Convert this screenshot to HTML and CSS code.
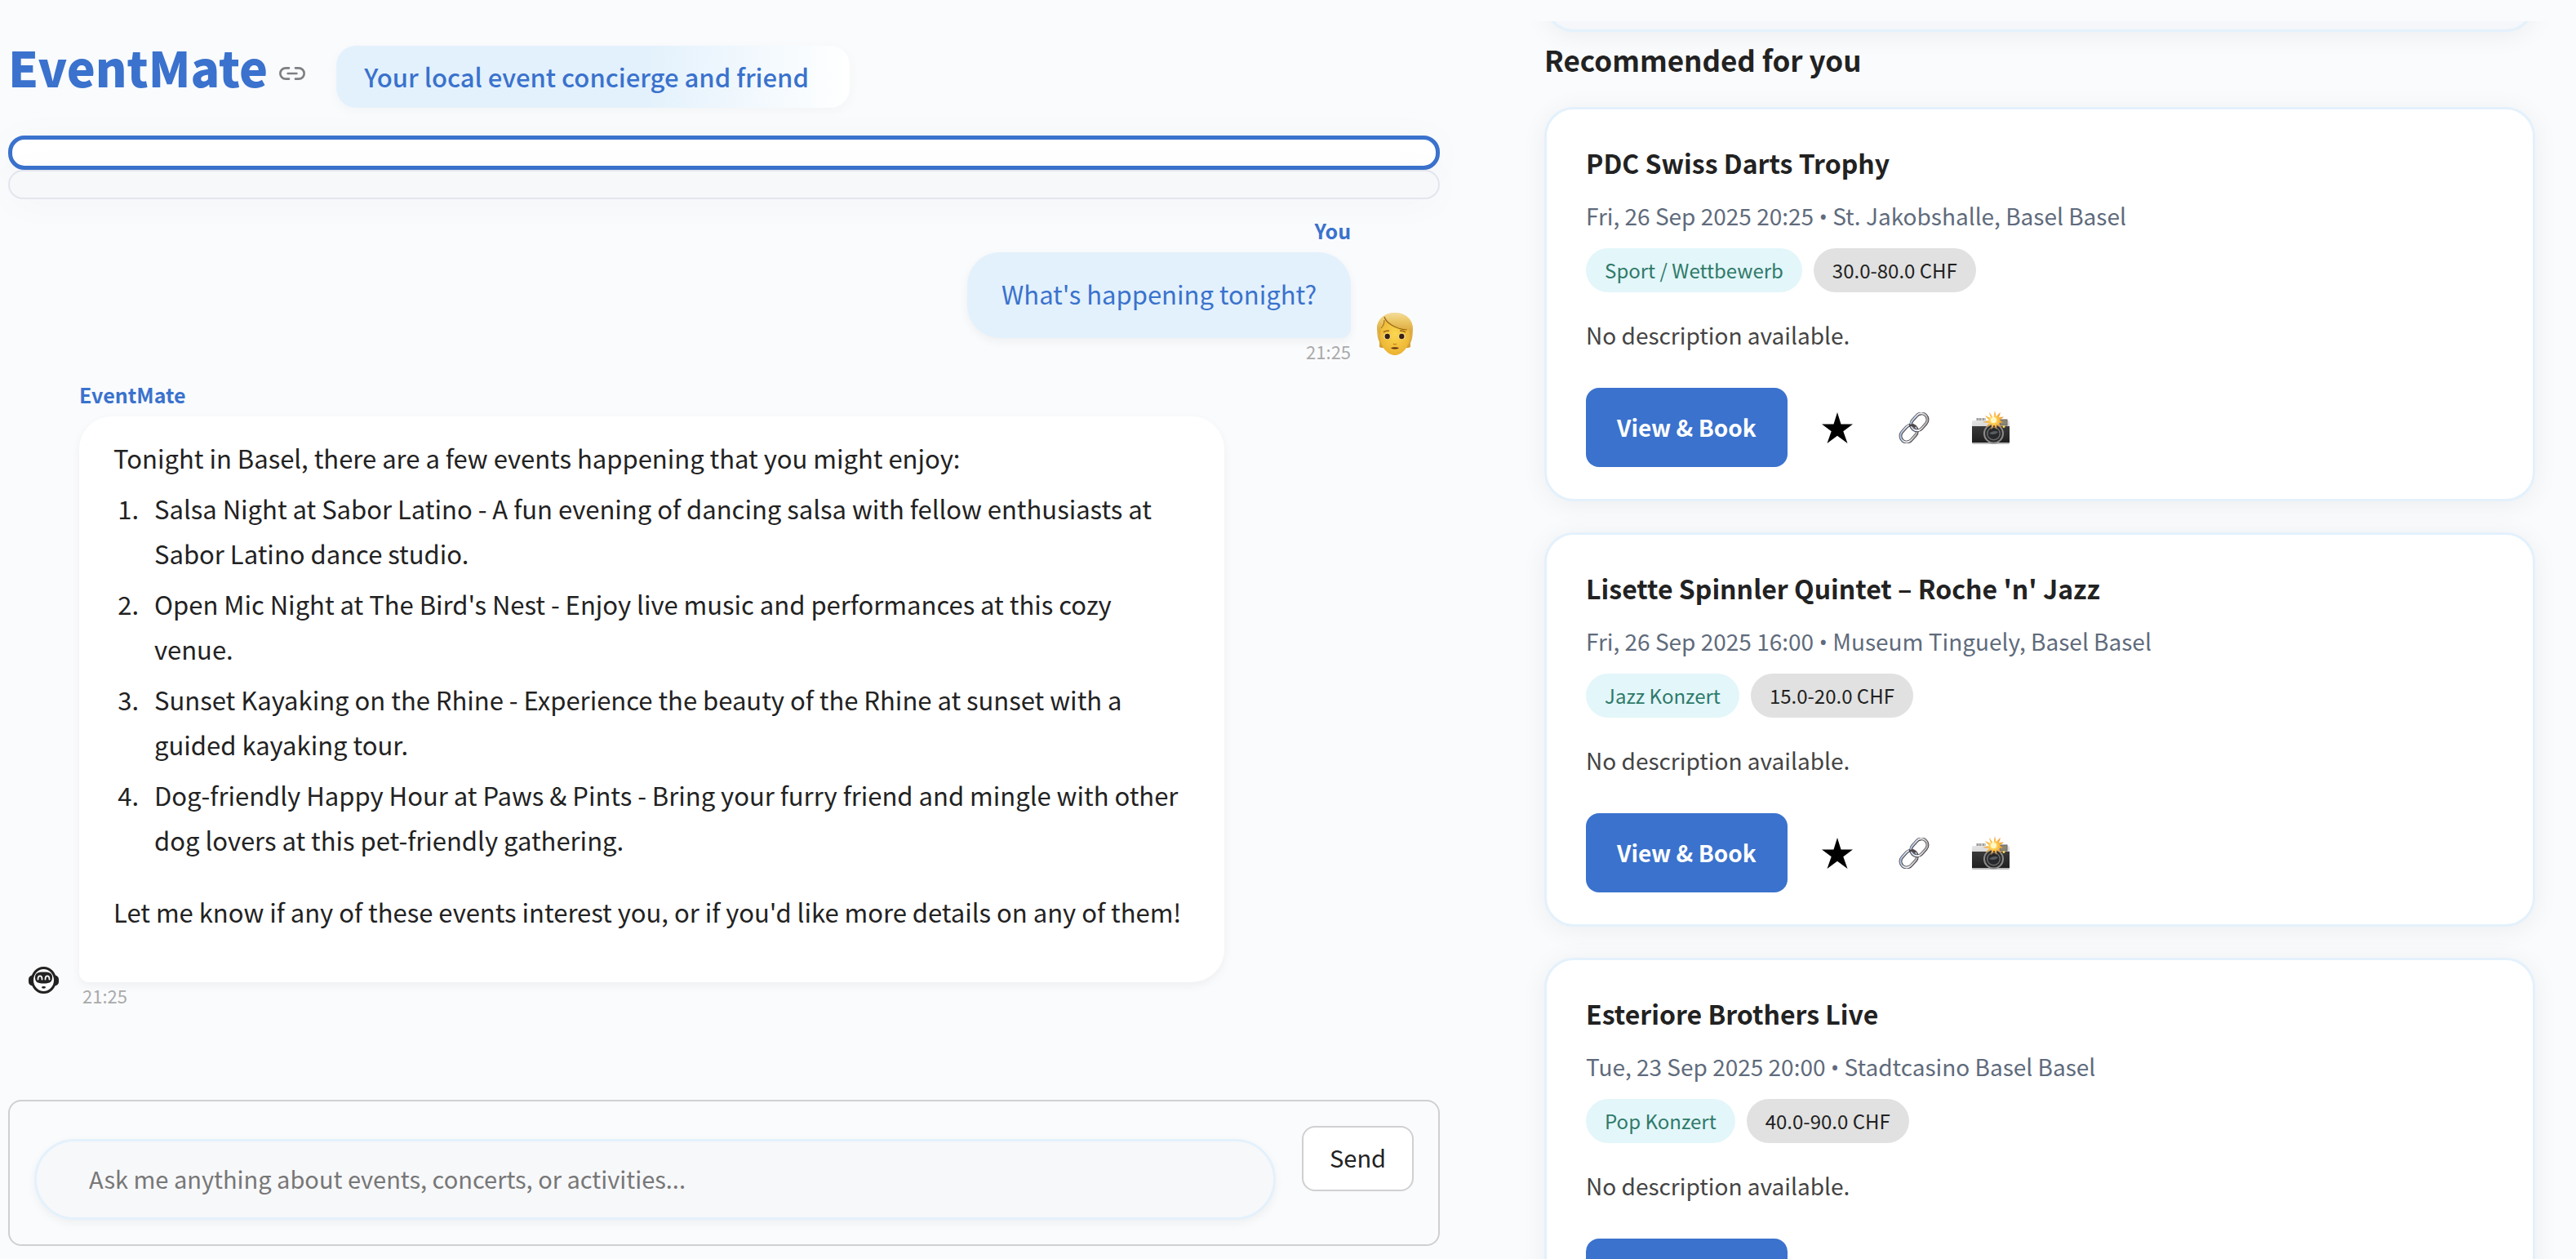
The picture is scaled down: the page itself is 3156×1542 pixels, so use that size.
FILE: index.html
```html
<!DOCTYPE html>
<html lang="en">
<head>
<meta charset="utf-8">
<meta name="viewport" content="width=device-width, initial-scale=1">
<title>EventMate</title>
<link rel="stylesheet" href="styles.css">
</head>
<body>
<svg class="sprite" aria-hidden="true">
  <defs>
    <linearGradient id="chrome" x1="0" y1="0" x2="1" y2="1">
      <stop offset="0" stop-color="#9db8e0"/><stop offset=".5" stop-color="#f4f7fb"/><stop offset="1" stop-color="#a39ea2"/>
    </linearGradient>
    <linearGradient id="silver" x1="0" y1="0" x2="0" y2="1">
      <stop offset="0" stop-color="#e4e4e4"/><stop offset="1" stop-color="#b9b9b9"/>
    </linearGradient>
    <linearGradient id="leather" x1="0" y1="0" x2="0" y2="1">
      <stop offset="0" stop-color="#3a3a3a"/><stop offset="1" stop-color="#1f1f1f"/>
    </linearGradient>
    <radialGradient id="flash">
      <stop offset="0" stop-color="#fffbe0"/><stop offset=".3" stop-color="#ffd65a"/><stop offset="1" stop-color="#f08a1c"/>
    </radialGradient>
    <linearGradient id="hair" x1="0" y1="0" x2="0" y2="1">
      <stop offset="0" stop-color="#f3dc9c"/><stop offset=".35" stop-color="#ecc766"/><stop offset="1" stop-color="#d29a2c"/>
    </linearGradient>
    <radialGradient id="skin" cx=".5" cy=".4" r=".65">
      <stop offset="0" stop-color="#fbd750"/><stop offset="1" stop-color="#eab030"/>
    </radialGradient>
    <symbol id="star" viewBox="0 0 38 38">
      <path d="M19 0 23.5 14.500H38L26.300 23.200 31.500 38 19 28.700 6.500 38 11.700 23.200 0 14.500H14.500Z"/>
    </symbol>
    <symbol id="link" viewBox="0 0 38 38">
      <g fill="none" transform="rotate(-48 19 19)">
        <rect x="-2" y="11.500" width="23" height="15" rx="7.500" stroke="#4b4548" stroke-width="3.800"/>
        <rect x="-2" y="11.300" width="23" height="15" rx="7.500" stroke="url(#chrome)" stroke-width="2"/>
        <rect x="17" y="11.500" width="23" height="15" rx="7.500" stroke="#4b4548" stroke-width="3.800"/>
        <rect x="17" y="11.300" width="23" height="15" rx="7.500" stroke="url(#chrome)" stroke-width="2"/>
        <path d="M17 12.500c3 2 4 4 4 7" stroke="#4b4548" stroke-width="2.600"/>
      </g>
    </symbol>
    <symbol id="camera" viewBox="0 0 46 42">
      <path d="M5 9h12v4H5z" fill="#c9c9c9"/>
      <path d="M7 9v3M10 9v3M14 9v3" stroke="#777" stroke-width="1"/>
      <rect x="0" y="12" width="46" height="29" rx="1.500" fill="url(#silver)"/>
      <rect x="0" y="19" width="46" height="20" fill="url(#leather)"/>
      <rect x="34" y="11" width="9" height="7" fill="#8c8672" stroke="#666"/>
      <circle cx="26.500" cy="28" r="12.500" fill="#8b8b8b"/>
      <circle cx="26.500" cy="28" r="10.500" fill="#2a2a2a"/>
      <circle cx="26.500" cy="28" r="8.500" fill="#6b6b6b"/>
      <circle cx="26.500" cy="28" r="7" fill="#26282b"/>
      <path d="M21 28c3-3 8-4 11-2-2 3-7 4-11 2z" fill="#595d62"/>
      <circle cx="39" cy="19.500" r="1.500" fill="#ffd84a"/>
      <path d="M26 11 28 0l1.500 7L35 2l-2 6 6-.500-5 4 4 3-5.500.5 4 6-6-4-.5 6-3-5.500-3.500 6 .5-7-7 4 4-5.500-8-1 8-2-5-6 7 3-2-7 4 5z" fill="url(#flash)"/>
      <circle cx="26.500" cy="11.500" r="3.500" fill="#fff7c8"/>
    </symbol>
    <symbol id="person" viewBox="0 0 44 52">
      <path d="M0 20C0 8 9 0 22 0s22 8 22 20c0 8-1 13-3 17v5c-3 2-7 1-9-1H12c-2 2-6 3-9 1v-6C1 32 0 27 0 20z" fill="url(#hair)"/>
      <path d="M4 20c0-5 2-9 6-11 6 7 17 10 28 10 2 4 2 9 2 13-1 10-9 20-18 20S5 42 4 32z" fill="url(#skin)"/>
      <path d="M0 20C0 9 9 0 22 0s22 9 22 20l-3 9c0-4-1-7-3-9-12 0-22-5-28-12 0 6-3 9-5 11-1 3-1 6-1 9z" fill="url(#hair)"/>
      <path d="M9 5c2 7 13 15 28 16" fill="none" stroke="#966313" stroke-width="1.200"/>
      <path d="M9 9c0 5-2 8-4 10" fill="none" stroke="#966313" stroke-width="1"/>
      <path d="M8 24c2-2 4-2 7-2M28 22c3 0 5 0 7 2" fill="none" stroke="#9a6416" stroke-width="1.300"/>
      <ellipse cx="12.500" cy="29" rx="4" ry="3.600" fill="#fff3d8"/><circle cx="12.700" cy="29" r="3.200" fill="#382012"/>
      <ellipse cx="30.500" cy="29" rx="4" ry="3.600" fill="#fff3d8"/><circle cx="30.300" cy="29" r="3.200" fill="#382012"/>
      <path d="M20 38c1 1 3 1 4 0" fill="none" stroke="#c98616" stroke-width="1.400"/>
      <path d="M17 43c3-1 7-1 10 0-2 2-8 2-10 0z" fill="#5f2c10"/>
    </symbol>
  </defs>
</svg>

<div class="layout">
  <main class="chat">
    <header class="brand">
      <h1 class="brand-name">EventMate</h1>
      <a class="anchor" href="#eventmate" aria-label="Link to heading">
        <svg viewBox="0 0 24 24" fill="none" stroke="currentColor" stroke-width="2" stroke-linecap="round" stroke-linejoin="round"><path d="M15 7h3a5 5 0 0 1 5 5 5 5 0 0 1-5 5h-3m-6 0H6a5 5 0 0 1-5-5 5 5 0 0 1 5-5h3"/><path d="M8 12h8"/></svg>
      </a>
      <p class="tagline">Your local event concierge and friend</p>
    </header>

    <div class="panel panel-active"></div>
    <div class="panel panel-quiet"></div>

    <section class="messages" aria-label="Conversation">
      <article class="message message-user">
        <div class="message-body">
          <p class="author">You</p>
          <div class="bubble">What's happening tonight?</div>
          <time class="time">21:25</time>
        </div>
        <svg class="avatar avatar-user" role="img" aria-label="You"><use href="#person"/></svg>
      </article>

      <article class="message message-bot">
        <svg class="avatar avatar-bot" viewBox="0 0 37 33" role="img" aria-label="EventMate">
          <rect x="0" y="10.500" width="37" height="13" rx="5" fill="#222"/>
          <ellipse cx="18.500" cy="16.500" rx="14" ry="15" fill="#fbfcfe" stroke="#222" stroke-width="3"/>
          <path d="M8 13c0-5 3-6.500 10.500-6.500S29 8 29 13s-2 7.500-10.500 7.500S8 18 8 13z" fill="#222"/>
          <path d="M11.500 15.500c0-5.500 5-5.500 5 0M20.500 15.500c0-5.500 5-5.500 5 0" fill="none" stroke="#fff" stroke-width="1.800" stroke-linecap="round"/>
          <ellipse cx="18.500" cy="25.300" rx="2.500" ry="1.400" fill="#222"/>
        </svg>
        <div class="message-body">
          <p class="author">EventMate</p>
          <div class="bubble">
            <p>Tonight in Basel, there are a few events happening that you might enjoy:</p>
            <ol>
              <li>Salsa Night at Sabor Latino - A fun evening of dancing salsa with fellow enthusiasts at Sabor Latino dance studio.</li>
              <li>Open Mic Night at The Bird's Nest - Enjoy live music and performances at this cozy venue.</li>
              <li>Sunset Kayaking on the Rhine - Experience the beauty of the Rhine at sunset with a guided kayaking tour.</li>
              <li>Dog-friendly Happy Hour at Paws &amp; Pints - Bring your furry friend and mingle with other dog lovers at this pet-friendly gathering.</li>
            </ol>
            <p class="closing">Let me know if any of these events interest you, or if you'd like more details on any of them!</p>
          </div>
          <time class="time">21:25</time>
        </div>
      </article>
    </section>

    <form class="composer">
      <input class="composer-input" type="text" aria-label="Message" placeholder="Ask me anything about events, concerts, or activities...">
      <button class="send" type="button">Send</button>
    </form>
  </main>

  <aside class="events">
    <div class="card card-previous"></div>
    <h2 class="events-title">Recommended for you</h2>

    <article class="card">
      <h3 class="card-title">PDC Swiss Darts Trophy</h3>
      <p class="meta">Fri, 26 Sep 2025 20:25 <span class="dot">•</span> St. Jakobshalle, Basel Basel</p>
      <div class="chips"><span class="chip chip-genre">Sport / Wettbewerb</span><span class="chip chip-price">30.0-80.0 CHF</span></div>
      <p class="description">No description available.</p>
      <div class="actions">
        <button class="book" type="button">View &amp; Book</button>
        <button class="icon" type="button" aria-label="Save"><svg class="icon-star"><use href="#star"/></svg></button>
        <button class="icon" type="button" aria-label="Copy link"><svg class="icon-link"><use href="#link"/></svg></button>
        <button class="icon" type="button" aria-label="Photos"><svg class="icon-camera"><use href="#camera"/></svg></button>
      </div>
    </article>

    <article class="card">
      <h3 class="card-title">Lisette Spinnler Quintet – Roche 'n' Jazz</h3>
      <p class="meta">Fri, 26 Sep 2025 16:00 <span class="dot">•</span> Museum Tinguely, Basel Basel</p>
      <div class="chips"><span class="chip chip-genre">Jazz Konzert</span><span class="chip chip-price">15.0-20.0 CHF</span></div>
      <p class="description">No description available.</p>
      <div class="actions">
        <button class="book" type="button">View &amp; Book</button>
        <button class="icon" type="button" aria-label="Save"><svg class="icon-star"><use href="#star"/></svg></button>
        <button class="icon" type="button" aria-label="Copy link"><svg class="icon-link"><use href="#link"/></svg></button>
        <button class="icon" type="button" aria-label="Photos"><svg class="icon-camera"><use href="#camera"/></svg></button>
      </div>
    </article>

    <article class="card">
      <h3 class="card-title">Esteriore Brothers Live</h3>
      <p class="meta">Tue, 23 Sep 2025 20:00 <span class="dot">•</span> Stadtcasino Basel Basel</p>
      <div class="chips"><span class="chip chip-genre">Pop Konzert</span><span class="chip chip-price">40.0-90.0 CHF</span></div>
      <p class="description">No description available.</p>
      <div class="actions">
        <button class="book" type="button">View &amp; Book</button>
        <button class="icon" type="button" aria-label="Save"><svg class="icon-star"><use href="#star"/></svg></button>
        <button class="icon" type="button" aria-label="Copy link"><svg class="icon-link"><use href="#link"/></svg></button>
        <button class="icon" type="button" aria-label="Photos"><svg class="icon-camera"><use href="#camera"/></svg></button>
      </div>
    </article>
  </aside>
</div>
</body>
</html>
```
FILE: styles.css
```css
* {
  box-sizing: border-box;
}

:root {
  --blue: #3a72cd;
  --sky: #e3f1fc;
  --ink: #222;
  --page: #fafbfd;
  --soft: #f7f8fa;
  --line: #d0d0d2;
}

body {
  margin: 0;
  background: var(--page);
  color: var(--ink);
  font-family: "Noto Sans CJK SC", "Noto Sans", sans-serif;
  font-size: 32px;
  overflow: hidden;
}

h1, h2, h3, p, ol {
  margin: 0;
}

button, input {
  font: inherit;
  color: inherit;
}

.sprite {
  position: absolute;
  width: 0;
  height: 0;
}

.layout {
  display: grid;
  grid-template-columns: 591fr 409fr;
  gap: 128px;
  height: 100vh;
  padding: 0 50px 0 10px;
}

/* Chat column */

.chat {
  display: flex;
  flex-direction: column;
  min-width: 0;
  padding: 56px 0 16px;
}

.brand {
  display: flex;
  align-items: flex-start;
  height: 76px;
  margin-bottom: 34px;
}

.brand-name {
  color: var(--blue);
  font-size: 59px;
  line-height: 52px;
  font-weight: 900;
}

.anchor {
  display: flex;
  margin: 18px 0 0 14px;
  color: #7d7f83;
}

.anchor svg {
  width: 32px;
  height: 32px;
}

.tagline {
  margin-left: 38px;
  padding: 14px 50px 14px 34px;
  border-radius: 24px;
  background: linear-gradient(90deg, var(--sky) 60%, #fff);
  box-shadow: 0 4px 16px rgba(0, 0, 0, .03);
  color: var(--blue);
  font-size: 31px;
  line-height: 48px;
  font-weight: 500;
}

.panel {
  border-radius: 20px;
  box-shadow: 0 4px 48px rgba(0, 0, 0, .03);
}

.panel-active {
  height: 42px;
  border: 5px solid var(--blue);
  background: #fff;
}

.panel-quiet {
  height: 36px;
  border: 2px solid #e3e5ee;
  background: var(--soft);
}

.messages {
  display: flex;
  flex-direction: column;
  padding-top: 18px;
}

.message {
  display: flex;
}

.message-body {
  display: flex;
  flex-direction: column;
}

.message-user {
  justify-content: flex-end;
  gap: 32px;
  padding-right: 33px;
}

.message-user .message-body {
  align-items: flex-end;
}

.message-bot {
  gap: 25px;
  margin-top: 17px;
  padding: 0 264px 0 25px;
}

.author {
  margin-bottom: 7px;
  color: var(--blue);
  font-size: 25px;
  line-height: 40px;
  font-weight: 700;
}

.bubble {
  padding: 23px 42px 27px;
  border-radius: 40px;
  background: #fff;
  box-shadow: 0 4px 12px rgba(0, 0, 0, .05);
  font-size: 31px;
  line-height: 55px;
}

.message-user .bubble {
  border-bottom-right-radius: 12px;
  background: var(--sky);
  color: var(--blue);
}

.message-bot .bubble {
  border-bottom-left-radius: 12px;
}

.bubble ol {
  margin-bottom: 33px;
  padding-left: 38px;
}

.bubble li {
  margin-top: 7px;
  padding-left: 12px;
}

.closing {
  margin-bottom: 32px;
}

.time {
  color: #aaa;
  font-size: 22px;
  line-height: 32px;
}

.message-bot .time {
  padding-left: 4px;
}

.avatar {
  flex: none;
  align-self: flex-end;
}

.avatar-user {
  width: 44px;
  height: 52px;
  margin-bottom: 11px;
}

.avatar-bot {
  width: 37px;
  height: 33px;
  margin-bottom: 18px;
}

.composer {
  display: flex;
  align-items: flex-start;
  gap: 32px;
  margin-top: auto;
  padding: 30px;
  border: 2px solid var(--line);
  border-radius: 16px;
}

.composer-input {
  flex: 1;
  min-width: 0;
  height: 99px;
  margin-top: 16px;
  padding: 0 64px 4px;
  border: 3px solid var(--sky);
  border-radius: 50px;
  background: var(--soft);
  box-shadow: 0 4px 12px rgba(0, 0, 0, .05);
  font-size: 29px;
}

.composer-input::placeholder {
  color: #777;
  opacity: 1;
}

.send {
  width: 137px;
  height: 80px;
  padding: 0 0 4px;
  border: 2px solid var(--line);
  border-radius: 16px;
  background: #fff;
  font-size: 29px;
}

/* Recommendations column */

.events {
  height: calc(100vh - 26px);
  margin: 26px -50px 0 -40px;
  padding: 0 50px 0 40px;
  overflow: hidden;
}

.card {
  margin-bottom: 38px;
  padding: 39px 48px;
  border: 3px solid var(--sky);
  border-radius: 36px;
  background: #fff;
  box-shadow: 0 4px 32px rgba(0, 0, 0, .06);
}

.card-previous {
  height: 72px;
  margin: -59px 0 6px;
  padding: 0;
  background: #f5f7fb;
}

.events-title {
  margin-bottom: 30px;
  font-size: 35px;
  line-height: 56px;
  font-weight: 700;
}

.card-title {
  font-size: 32px;
  line-height: 52px;
  font-weight: 700;
}

.meta {
  margin-top: 15px;
  color: #5f6b7c;
  font-size: 28px;
  line-height: 48px;
}

.dot {
  font-family: "Open Sans", sans-serif;
  line-height: 1;
}

.chips {
  display: flex;
  gap: 14px;
  margin-top: 16px;
}

.chip {
  padding: 0 23px;
  border-radius: 27px;
  font-size: 24px;
  line-height: 54px;
}

.chip-genre {
  background: #e3f6fa;
  color: #2f7a69;
}

.chip-price {
  background: #e1e1e1;
}

.description {
  margin-top: 28px;
  color: #444;
  font-size: 28px;
  line-height: 48px;
}

.actions {
  display: flex;
  align-items: center;
  margin-top: 41px;
}

.book {
  height: 97px;
  margin-right: 28px;
  padding: 0 38px 2px;
  border: 0;
  border-radius: 16px;
  background: var(--blue);
  color: #fff;
  font-size: 28px;
  line-height: 40px;
  font-weight: 700;
}

.icon {
  display: flex;
  align-items: center;
  justify-content: center;
  width: 66px;
  height: 66px;
  margin-right: 28px;
  padding: 0;
  border: 0;
  background: none;
}

.icon-star,
.icon-link {
  width: 38px;
  height: 38px;
}

.icon-camera {
  width: 46px;
  height: 42px;
}
```
